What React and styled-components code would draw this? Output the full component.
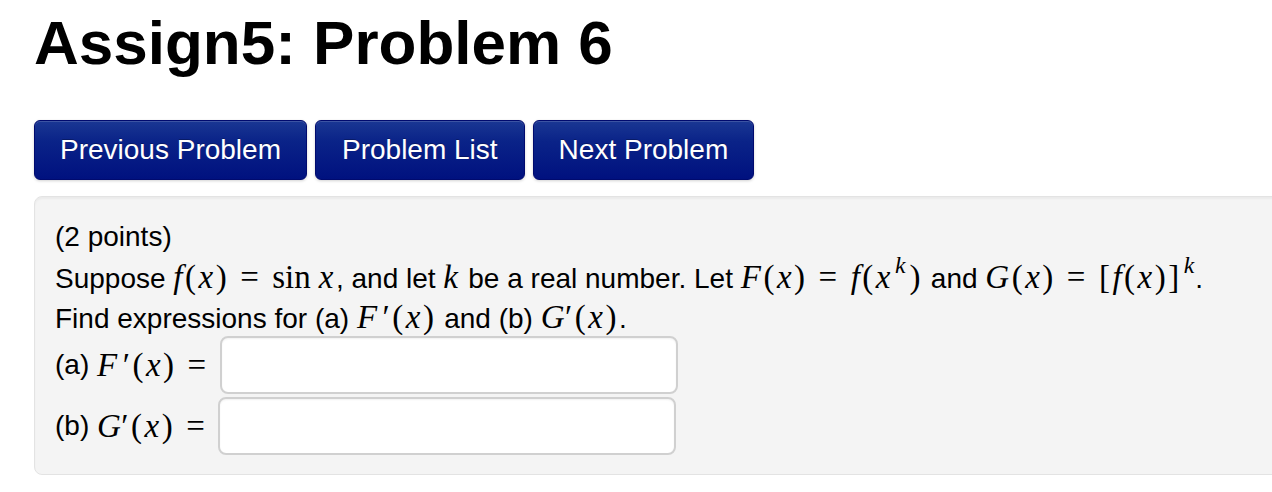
import React from "react";
import styled, { createGlobalStyle } from "styled-components";

const Global = createGlobalStyle`
  html, body { margin: 0; padding: 0; background: #ffffff; }
  body { font-family: "Liberation Sans", Arial, Helvetica, sans-serif; color: #000; overflow: hidden; }
`;

const Page = styled.div`
  padding-left: 34px;
  width: 1272px;
  box-sizing: border-box;
`;

const Title = styled.h1`
  margin: 12px 0 0;
  font-size: 62px;
  line-height: 62px;
  font-weight: 700;
  color: #000;
`;

const Nav = styled.nav`
  display: flex;
  gap: 8px;
  margin-top: 46px;
`;

const NavButton = styled.button`
  font-family: "Liberation Sans", Arial, sans-serif;
  font-size: 28px;
  line-height: 40px;
  padding: 9px ${(p) => p.$px || 25}px;
  color: #fff;
  border: 1px solid #000a6e;
  border-radius: 6px;
  background: linear-gradient(to bottom, #1a3793 0%, #0a2388 35%, #00117f 100%);
  box-shadow: 0 1px 3px rgba(0, 0, 0, 0.18), inset 0 1px 0 rgba(255, 255, 255, 0.15);
  text-shadow: 0 -1px 0 rgba(0, 0, 0, 0.25);
  cursor: pointer;
`;

const Well = styled.div`
  margin-top: 16px;
  width: 1280px;
  box-sizing: border-box;
  padding: 20px 20px 19px 20px;
  background: #f4f4f4;
  border: 1px solid #e3e3e3;
  border-radius: 8px;
  box-shadow: inset 0 2px 2px rgba(0, 0, 0, 0.04);
  font-size: 28px;
  line-height: 40px;
`;

const Line = styled.div`
  white-space: nowrap;
  height: 40px;
`;

const Math = styled.span`
  font-family: "Liberation Serif", "Times New Roman", serif;
  font-size: 33px;
  letter-spacing: 2.5px;
  white-space: nowrap;
`;

const V = styled.i`
  font-style: italic;
`;

const Fn = styled.span`
  letter-spacing: 0;
  margin-right: 8px;
`;

const Rel = styled.span`
  margin: 0 11px 0 11px;
`;

const Sup = styled.sup`
  font-size: 0.72em;
  font-style: italic;
  vertical-align: 0.62em;
  line-height: 0;
  letter-spacing: 0;
  margin: 0 ${(p) => (p.$end ? 1 : 4)}px 0 2px;
`;

const Prime = styled.span`
  font-style: normal;
  margin-left: ${(p) => p.$ml || 2}px;
`;

const Answers = styled.div`
  display: flex;
  flex-direction: column;
  gap: 3px;
  margin-top: -1px;
`;

const AnswerRow = styled.label`
  display: flex;
  align-items: center;
  height: 58px;
`;

const AnswerInput = styled.input`
  width: 458px;
  height: 58px;
  box-sizing: border-box;
  margin-left: ${(p) => p.$ml}px;
  background: #fff;
  border: 2px solid #d0d0d0;
  border-radius: 8px;
  box-shadow: inset 0 1px 2px rgba(0, 0, 0, 0.06);
  font-size: 28px;
  padding: 0 10px;
  outline: none;
`;

export default function App() {
  return (
    <>
      <Global />
      <Page>
        <Title>Assign5: Problem 6</Title>
        <Nav>
          <NavButton $px={25}>Previous Problem</NavButton>
          <NavButton $px={26}>Problem List</NavButton>
          <NavButton $px={25}>Next Problem</NavButton>
        </Nav>
        <Well>
          <Line>(2 points)</Line>
          <Line>
            Suppose{" "}
            <Math>
              <V>f</V>(<V>x</V>)<Rel>=</Rel><Fn>sin</Fn><V>x</V>
            </Math>
            , and let <Math><V>k</V></Math> be a real number. Let{" "}
            <Math>
              <V>F</V>(<V>x</V>)<Rel>=</Rel><V>f</V>(<V>x</V><Sup>k</Sup>)
            </Math>{" "}
            and{" "}
            <Math>
              <V>G</V>(<V>x</V>)<Rel>=</Rel>[<V>f</V>(<V>x</V>)]<Sup $end>k</Sup>
            </Math>
            .
          </Line>
          <Line>
            Find expressions for (a){" "}
            <Math>
              <V>F</V><Prime $ml={3}>′</Prime>(<V>x</V>)
            </Math>{" "}
            and (b){" "}
            <Math>
              <V>G</V><Prime $ml={-2}>′</Prime>(<V>x</V>)
            </Math>
            .
          </Line>
          <Answers>
            <AnswerRow>
              (a)&nbsp;
              <Math>
                <V>F</V><Prime $ml={3}>′</Prime>(<V>x</V>)<Rel>=</Rel>
              </Math>
              <AnswerInput $ml={0} type="text" />
            </AnswerRow>
            <AnswerRow>
              (b)&nbsp;
              <Math>
                <V>G</V><Prime $ml={-2}>′</Prime>(<V>x</V>)<Rel>=</Rel>
              </Math>
              <AnswerInput $ml={0} type="text" />
            </AnswerRow>
          </Answers>
        </Well>
      </Page>
    </>
  );
}
